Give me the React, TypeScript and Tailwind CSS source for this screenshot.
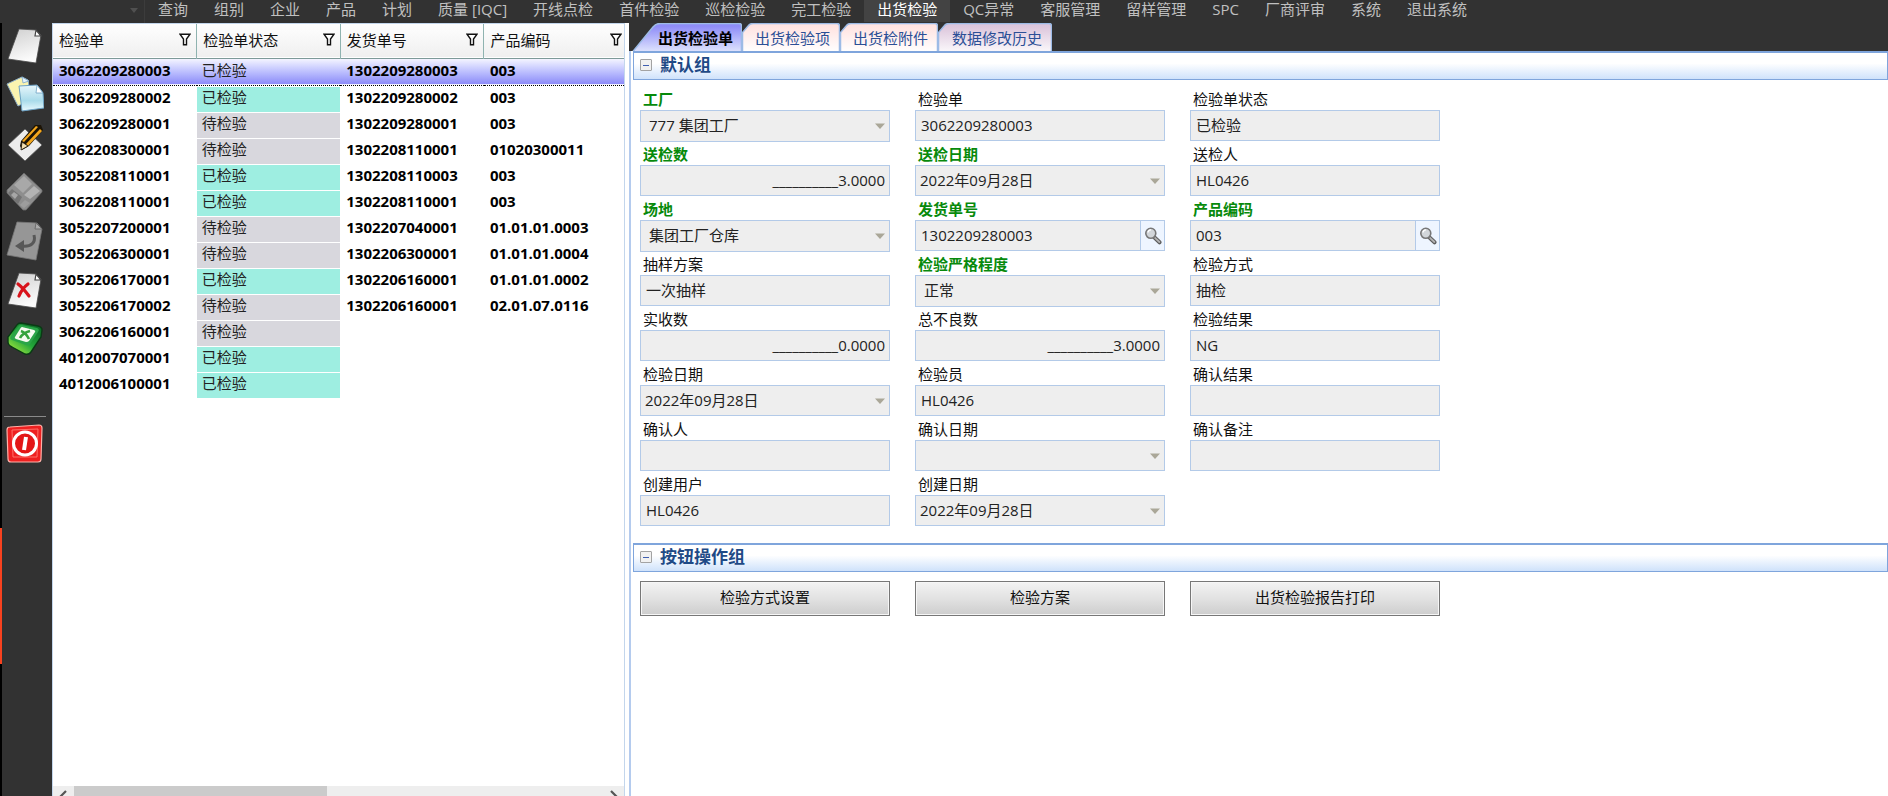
import { useState } from 'react'
import type { ReactNode } from 'react'

interface Inspeccion {
  orden: string
  hecho: boolean
  envio: string
  producto: string
}

interface Campo {
  id: string
  label: string
  value: string
  tipo?: 'combo' | 'date' | 'search' | 'number'
  required?: boolean
}

const MENU = [
  '查询', '组别', '企业', '产品', '计划', '质量 [IQC]', '开线点检', '首件检验', '巡检检验', '完工检验',
  '出货检验', 'QC异常', '客服管理', '留样管理', 'SPC', '厂商评审', '系统', '退出系统',
]

const COLUMNS = ['检验单', '检验单状态', '发货单号', '产品编码']

const ROWS: Inspeccion[] = [
  { orden: '3062209280003', hecho: true, envio: '1302209280003', producto: '003' },
  { orden: '3062209280002', hecho: true, envio: '1302209280002', producto: '003' },
  { orden: '3062209280001', hecho: false, envio: '1302209280001', producto: '003' },
  { orden: '3062208300001', hecho: false, envio: '1302208110001', producto: '01020300011' },
  { orden: '3052208110001', hecho: true, envio: '1302208110003', producto: '003' },
  { orden: '3062208110001', hecho: true, envio: '1302208110001', producto: '003' },
  { orden: '3052207200001', hecho: false, envio: '1302207040001', producto: '01.01.01.0003' },
  { orden: '3052206300001', hecho: false, envio: '1302206300001', producto: '01.01.01.0004' },
  { orden: '3052206170001', hecho: true, envio: '1302206160001', producto: '01.01.01.0002' },
  { orden: '3052206170002', hecho: false, envio: '1302206160001', producto: '02.01.07.0116' },
  { orden: '3062206160001', hecho: false, envio: '', producto: '' },
  { orden: '4012007070001', hecho: true, envio: '', producto: '' },
  { orden: '4012006100001', hecho: true, envio: '', producto: '' },
]

const TABS = [
  { label: '出货检验单', width: 110, from: '#8f8df8', to: '#dfe4fd' },
  { label: '出货检验项', width: 98, from: '#ffe3e1', to: '#ffffff' },
  { label: '出货检附件', width: 98, from: '#ffe3e1', to: '#ffffff' },
  { label: '数据修改历史', width: 114, from: '#dcc6dc', to: '#fbf8fb' },
]

const FIELDS: Campo[] = [
  { id: 'factory', label: '工厂', value: '777 集团工厂', tipo: 'combo', required: true },
  { id: 'order', label: '检验单', value: '3062209280003' },
  { id: 'status', label: '检验单状态', value: '已检验' },
  { id: 'sent', label: '送检数', value: '__________3.0000', tipo: 'number', required: true },
  { id: 'sentDate', label: '送检日期', value: '2022年09月28日', tipo: 'date', required: true },
  { id: 'sender', label: '送检人', value: 'HL0426' },
  { id: 'site', label: '场地', value: '集团工厂仓库', tipo: 'combo', required: true },
  { id: 'shipment', label: '发货单号', value: '1302209280003', tipo: 'search', required: true },
  { id: 'product', label: '产品编码', value: '003', tipo: 'search', required: true },
  { id: 'plan', label: '抽样方案', value: '一次抽样' },
  { id: 'strictness', label: '检验严格程度', value: '正常', tipo: 'combo', required: true },
  { id: 'method', label: '检验方式', value: '抽检' },
  { id: 'received', label: '实收数', value: '__________0.0000', tipo: 'number' },
  { id: 'defects', label: '总不良数', value: '__________3.0000', tipo: 'number' },
  { id: 'result', label: '检验结果', value: 'NG' },
  { id: 'inspDate', label: '检验日期', value: '2022年09月28日', tipo: 'date' },
  { id: 'inspector', label: '检验员', value: 'HL0426' },
  { id: 'confResult', label: '确认结果', value: '' },
  { id: 'confirmer', label: '确认人', value: '' },
  { id: 'confDate', label: '确认日期', value: '', tipo: 'date' },
  { id: 'confNote', label: '确认备注', value: '' },
  { id: 'creator', label: '创建用户', value: 'HL0426' },
  { id: 'created', label: '创建日期', value: '2022年09月28日', tipo: 'date' },
]

function FilterIcon() {
  return (
    <svg width="12" height="13" viewBox="0 0 12 13" fill="#fff" stroke="#111" strokeWidth="1.4">
      <path d="M1 1.2h10L7.5 6v5.8h-3V6z" />
    </svg>
  )
}

function Arrow() {
  return (
    <svg width="10" height="6" viewBox="0 0 10 6" className="pointer-events-none absolute right-[5px] top-[13px]">
      <path d="M0 0.5h10L5 6z" fill="#aaa798" />
    </svg>
  )
}

function SearchIcon() {
  return (
    <svg width="18" height="18" viewBox="0 0 18 18">
      <path d="M10.5 10.5l5 4.8" stroke="#5c5c5c" strokeWidth="4" strokeLinecap="round" />
      <path d="M11 10.8l4.4 4.2" stroke="#b4b4b4" strokeWidth="1.8" strokeLinecap="round" />
      <circle cx="6.8" cy="6.3" r="5" fill="#d2d6da" stroke="#777" strokeWidth="1.6" />
      <path d="M4 5.5a3 3 0 0 1 3-2.6" stroke="#fff" strokeWidth="1.4" fill="none" />
    </svg>
  )
}

function IconNew() {
  return (
    <svg width="40" height="40" viewBox="0 0 40 40">
      <defs>
        <linearGradient id="paper" x1="0" y1="0" x2="0.3" y2="1">
          <stop offset="0" stopColor="#cfcfcf" />
          <stop offset="1" stopColor="#fbfbfb" />
        </linearGradient>
      </defs>
      <path d="M15 4l17 1 5 5-5 28-28-4z" fill="url(#paper)" stroke="#4a4a4a" strokeWidth="0.8" />
      <path d="M32 5l-1 6 6 0z" fill="#fff" stroke="#444" strokeWidth="1.2" />
    </svg>
  )
}

function IconCopy() {
  return (
    <svg width="40" height="40" viewBox="0 0 40 40">
      <defs>
        <linearGradient id="sheet" x1="0" y1="0" x2="0" y2="1">
          <stop offset="0" stopColor="#e8f6fb" />
          <stop offset="0.6" stopColor="#a9dbea" />
          <stop offset="1" stopColor="#eafaff" />
        </linearGradient>
      </defs>
      <path d="M3 10L18 3l6 3 3 19-13 7z" fill="#faf4b0" stroke="#8fb0c8" strokeWidth="1" />
      <path d="M18 3l1 6 6-2z" fill="#e4f2fc" stroke="#7ba6c8" strokeWidth="0.8" />
      <path d="M15 12l18-1 6 8 1 15-22 3z" fill="url(#sheet)" stroke="#6da2c4" strokeWidth="1" />
      <path d="M33 11l-1 8 7 0z" fill="#fff" stroke="#6da2c4" strokeWidth="0.8" />
    </svg>
  )
}

function IconEdit() {
  return (
    <svg width="40" height="40" viewBox="0 0 40 40">
      <path d="M21 6l17 16-17 16L4 22z" fill="#ececec" stroke="#555" strokeWidth="0.8" />
      <path d="M17 18L31 2h6l2 5-14 16-7 4-2-4z" fill="#1c1406" />
      <path d="M18 18L32 3l2 1-14 15zM24 23L38 8l-2-2-14 15z" fill="#f3a61c" />
      <path d="M18 19l6 4-7 4z" fill="#f4dfb0" stroke="#1c1406" strokeWidth="0.8" />
    </svg>
  )
}

function IconSave() {
  return (
    <svg width="40" height="40" viewBox="0 0 40 40">
      <path d="M20 1l18 17v2L22 38h-3L3 21v-3z" fill="#8e8e8e" stroke="#6a6a6a" strokeWidth="0.8" />
      <path d="M20 4l8 8-9 9-9-8z" fill="#a8a8a8" />
      <path d="M30 14l6 5-10 8-6-4z" fill="#b4b4b4" />
      <path d="M8 17l10 8-4 7L4 21z" fill="#747474" />
      <path d="M10 20l4 3-3 4-4-4z" fill="#a6a6a6" />
      <path d="M21 28l5 3-6 5-4-3z" fill="#9d9d9d" />
    </svg>
  )
}

function IconUndo() {
  return (
    <svg width="40" height="40" viewBox="0 0 40 40">
      <path d="M13 1l20 1 5 6-6 31-29-5z" fill="#969696" stroke="#777" strokeWidth="0.8" />
      <path d="M32 2l-1 6 7 0z" fill="#ababab" stroke="#6c6c6c" strokeWidth="1" />
      <path d="M30 14c2 8-3 12-12 11" fill="none" stroke="#585858" strokeWidth="3" />
      <path d="M11 25l9-6v12z" fill="#585858" />
    </svg>
  )
}

function IconDelete() {
  return (
    <svg width="40" height="40" viewBox="0 0 40 40">
      <path d="M15 3l17 1 5 5-5 29-28-4z" fill="url(#paper)" stroke="#4a4a4a" strokeWidth="0.8" />
      <path d="M32 4l-1 6 6 0z" fill="#fff" stroke="#444" strokeWidth="1.2" />
      <path d="M14 14c4 3 8 8 11 12M24 14c-4 3-7 7-9 12" fill="none" stroke="#d8121a" strokeWidth="3.2" strokeLinecap="round" />
    </svg>
  )
}

function IconExcel() {
  return (
    <svg width="40" height="40" viewBox="0 0 40 40">
      <defs>
        <linearGradient id="xls" x1="1" y1="0" x2="0.2" y2="1">
          <stop offset="0" stopColor="#075f22" />
          <stop offset="0.6" stopColor="#23a63a" />
          <stop offset="1" stopColor="#a4ea3e" />
        </linearGradient>
      </defs>
      <path d="M17 4l17 3q4 1 4 4l-1 7-10 15q-2 3-6 2L8 28q-4-2-4-5v-5L13 6q1-2 4-2z" fill="url(#xls)" stroke="#0a3a14" strokeWidth="1.4" />
      <path d="M17 6l16 3q3 1 1 4l-8 12q-1 2-4 1L8 21q-3-1-1-4l7-9q1-2 3-2z" fill="#2ba548" />
      <path d="M18 8l12 3q2 1 1 2l-6 9q-1 1-3 1l-10-3q-2-1-1-2l5-8q1-2 2-2z" fill="#f6fbf0" />
      <path d="M17 12c3 1 6 4 8 8M26 12c-4 1-8 3-10 7" stroke="#36a23c" strokeWidth="2.6" fill="none" />
    </svg>
  )
}

function IconPower() {
  return (
    <svg width="40" height="40" viewBox="0 0 40 40">
      <path d="M6 3l29-2q3 0 3 3l-1 31q0 3-3 3H7q-3 0-3-3L3 6q0-3 3-3z" fill="#ee2020" stroke="#ffb0a8" strokeWidth="1.2" />
      <path d="M8 6l26-1-1 28H9z" fill="none" stroke="#ff7068" strokeWidth="1" />
      <circle cx="21" cy="19.5" r="11.5" fill="#e31616" stroke="#fff" strokeWidth="3" />
      <path d="M22 13l-2 13" stroke="#fff" strokeWidth="4" />
    </svg>
  )
}

const TOOLS = [
  { name: '新增', icon: <IconNew /> },
  { name: '复制', icon: <IconCopy /> },
  { name: '编辑', icon: <IconEdit /> },
  { name: '保存', icon: <IconSave /> },
  { name: '撤销', icon: <IconUndo /> },
  { name: '删除', icon: <IconDelete /> },
  { name: '导出', icon: <IconExcel /> },
]

function TabShape({ width, from, to, first, id }: { width: number; from: string; to: string; first: boolean; id: string }) {
  const left = first ? 'M0.5 29L21 4Q24 0.5 28 0.5' : 'M0.5 29V9.5L6.5 2.5Q8 0.5 11 0.5'
  return (
    <svg width={width} height="28" className="absolute inset-0">
      <defs>
        <linearGradient id={id} x1="0" y1="0" x2="0" y2="1">
          <stop offset="0.1" stopColor={from} />
          <stop offset="1" stopColor={to} />
        </linearGradient>
      </defs>
      <path d={`${left}H${width - 3}Q${width - 0.5} 0.5 ${width - 0.5} 3V29`} fill={`url(#${id})`} stroke="#9dbbe6" strokeWidth="1.5" />
    </svg>
  )
}

function Group({ title, children }: { title: string; children: ReactNode }) {
  return (
    <section>
      <h2 className="flex h-[29px] items-center border border-t-2 border-[#7fa5dc] bg-linear-to-b from-white from-40% to-[#cfe2fb] pb-0.5 pl-1.5 text-[17px] font-bold text-[#1f4a86]">
        <button aria-label={`收起${title}`} className="mr-2 flex h-3 w-3 items-center justify-center rounded-[1px] border border-[#a3a3a3] bg-[#f1f1f1]">
          <span className="h-px w-1.5 bg-[#3f5fb0]" />
        </button>
        {title}
      </h2>
      {children}
    </section>
  )
}

function Field({ campo }: { campo: Campo }) {
  const box = 'w-full border border-[#b3cae8] bg-[#eeeeee] pb-0.5 text-[#222] outline-none'
  return (
    <div className="h-[55px]">
      <label
        htmlFor={campo.id}
        className={campo.required ? 'block h-6 pl-[3px] leading-[26px] font-bold text-[#078a0b]' : 'block h-6 pl-[3px] leading-[26px] text-[#111]'}
      >
        {campo.label}
      </label>
      <div className="relative flex">
        {campo.tipo === 'combo' ? (
          <select id={campo.id} className={`${box} h-8 appearance-none pl-2`}>
            <option>{campo.value}</option>
          </select>
        ) : (
          <input
            id={campo.id}
            type="text"
            readOnly
            value={campo.value}
            className={`${box} h-[31px] min-w-0 ${campo.tipo === 'number' ? 'pr-1 text-right' : campo.tipo === 'date' ? 'pl-1' : 'pl-[5px]'}`}
          />
        )}
        {campo.tipo === 'search' && (
          <button aria-label={`查找${campo.label}`} className="flex w-6 shrink-0 items-center justify-center border border-l-0 border-[#b3cae8] bg-[#eef5ff]">
            <SearchIcon />
          </button>
        )}
        {(campo.tipo === 'combo' || campo.tipo === 'date') && <Arrow />}
      </div>
    </div>
  )
}

export default function App() {
  const [selected, setSelected] = useState(0)
  const [tab, setTab] = useState(0)

  return (
    <div className="flex h-screen flex-col overflow-hidden bg-[#323232] font-['Open_Sans','Noto_Sans_CJK_SC',sans-serif] text-[15px]">
      {/* Menu */}
      <nav className="flex h-[23px] shrink-0 overflow-hidden whitespace-nowrap">
        <div className="flex w-[145px] shrink-0 items-start justify-end border-r border-[#3c3c3c] pr-1.5 pt-2">
          <svg width="8" height="5" viewBox="0 0 8 5"><path d="M0 0h8L4 5z" fill="#505050" /></svg>
        </div>
        <div className="flex">
          {MENU.map((item) => (
            <button
              key={item}
              className={item === '出货检验' ? 'h-[22px] bg-[#434343] px-[13px] pb-1 leading-[18px] text-white' : 'h-[22px] px-[13px] pb-1 leading-[18px] text-[#c0c0c0]'}
            >
              {item}
            </button>
          ))}
        </div>
      </nav>

      <div className="flex min-h-0 flex-1">
        {/* Window edge */}
        <div className="flex w-0.5 shrink-0 flex-col bg-black">
          <div className="mt-[505px] h-[136px] bg-[#f8421f]" />
        </div>

        {/* Toolbar */}
        <aside className="flex w-[50px] shrink-0 flex-col items-start pl-0.5 pt-0.5">
          {TOOLS.map((tool) => (
            <button key={tool.name} aria-label={tool.name} className="mb-[9px] h-10 w-10 shrink-0">
              {tool.icon}
            </button>
          ))}
          <div className="mt-12 h-px w-[42px] shrink-0 bg-[#8a8a8a]" />
          <button aria-label="退出" className="mt-[7px] h-10 w-10 shrink-0">
            <IconPower />
          </button>
        </aside>

        {/* List */}
        <div className="flex w-[577px] shrink-0 bg-white pr-1">
          <div className="flex w-full flex-col overflow-hidden border-x border-t border-[#c3d6ec]">
            <div className="min-h-0 flex-1 overflow-hidden">
              <table className="w-[575px] table-fixed border-collapse whitespace-nowrap">
                <thead>
                  <tr className="h-[34px] border-b border-[#7d9a98] bg-linear-to-b from-white to-[#efefef]">
                    {COLUMNS.map((col) => (
                      <th key={col} className="border-r border-[#8fb3b0] pb-0.5 pl-1.5 pr-[5px] pt-0 text-left font-normal text-[#111]">
                        <div className="flex items-center justify-between">
                          {col}
                          <FilterIcon />
                        </div>
                      </th>
                    ))}
                  </tr>
                </thead>
                <tbody>
                  {ROWS.map((row, i) => (
                    <tr
                      key={row.orden}
                      onClick={() => setSelected(i)}
                      className={
                        i === selected
                          ? 'h-[27px] border-y border-dotted border-black bg-linear-to-b from-[#f4f4ff] to-[#8d8bf8] align-top leading-[22px]'
                          : 'h-[26px] align-top leading-[22px]'
                      }
                    >
                      <td className="p-0 pl-1.5 font-bold">{row.orden}</td>
                      <td className="p-0">
                        <div
                          className={
                            i === selected
                              ? 'h-[25px] pl-[5px] text-[#222]'
                              : row.hecho
                                ? 'mt-px h-[25px] bg-[#9eeee1] pl-[5px] leading-5 text-[#222]'
                                : 'mt-px h-[25px] bg-[#d8d7dd] pl-[5px] leading-5 text-[#222]'
                          }
                        >
                          {row.hecho ? '已检验' : '待检验'}
                        </div>
                      </td>
                      <td className="p-0 pl-1.5 font-bold">{row.envio}</td>
                      <td className="p-0 pl-1.5 font-bold">{row.producto}</td>
                    </tr>
                  ))}
                </tbody>
              </table>
            </div>
            <div className="flex h-2.5 shrink-0 items-start overflow-hidden bg-[#eeeeee]">
              <svg width="21" height="16" viewBox="0 0 21 16" fill="none" stroke="#555" strokeWidth="2.2"><path d="M13 5l-5 5 5 5" /></svg>
              <div className="h-full w-[253px] bg-[#cbcbcb]" />
              <svg width="21" height="16" viewBox="0 0 21 16" className="ml-auto" fill="none" stroke="#555" strokeWidth="2.2"><path d="M8 5l5 5-5 5" /></svg>
            </div>
          </div>
        </div>

        {/* Detail */}
        <main className="flex min-w-0 flex-1 flex-col">
          <div role="tablist" className="flex h-7 shrink-0 pl-[3px]">
            {TABS.map((t, i) => (
              <button
                key={t.label}
                role="tab"
                aria-selected={i === tab}
                onClick={() => setTab(i)}
                style={{ width: t.width }}
                className={
                  i === 0
                    ? 'relative h-7 pr-[9px] text-right leading-[30px] font-bold text-black'
                    : 'relative h-7 pr-2.5 text-right leading-[30px] text-[#2b4f96]'
                }
              >
                <TabShape width={t.width} from={t.from} to={t.to} first={i === 0} id={`tab${i}`} />
                <span className="relative">{t.label}</span>
              </button>
            ))}
          </div>
          <div className="flex-1 border-l-2 border-[#b4cbee] bg-white pl-0.5">
            <Group title="默认组">
              <div className="grid w-[807px] max-w-full grid-cols-3 gap-x-[25px] pb-[17px] pl-[7px] pt-1.5">
                {FIELDS.map((campo) => (
                  <Field key={campo.id} campo={campo} />
                ))}
              </div>
            </Group>
            <Group title="按钮操作组">
              <div className="grid w-[807px] max-w-full grid-cols-3 gap-x-[25px] pl-[7px] pt-[9px]">
                {['检验方式设置', '检验方案', '出货检验报告打印'].map((text) => (
                  <button
                    key={text}
                    className="h-[35px] border border-[#777] bg-linear-to-b from-[#f3f3f3] via-[#e2e2e2] via-50% to-[#cdcdcd] pb-0.5 text-[#111] shadow-[inset_0_0_0_1px_#f6f6f6]"
                  >
                    {text}
                  </button>
                ))}
              </div>
            </Group>
          </div>
        </main>
      </div>
    </div>
  )
}
